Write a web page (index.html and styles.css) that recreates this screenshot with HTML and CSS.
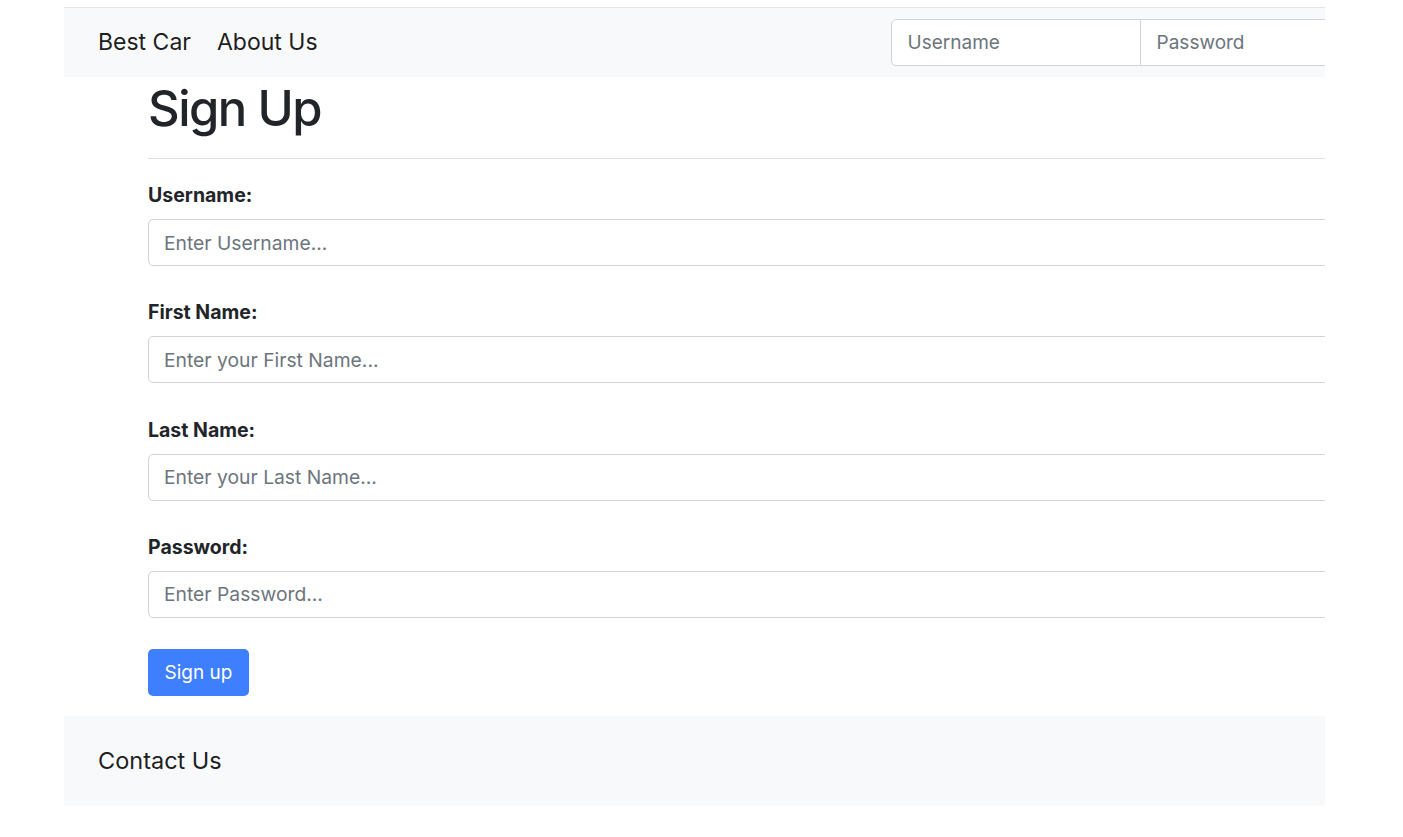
FILE: index.html
```html
<!DOCTYPE html>
<html>
<head>
<meta charset="utf-8">
<link rel="stylesheet" href="styles.css">
</head>
<body>
<div class="frame">
  <div class="page">
    <nav class="navbar">
      <a class="brand">Best Car</a>
      <a class="nav-link">About Us</a>
      <form class="login">
        <input class="login-input first" type="text" placeholder="Username">
        <input class="login-input" type="password" placeholder="Password">
      </form>
    </nav>
    <main class="signup">
      <h1 class="title">Sign Up</h1>
      <hr class="rule">
      <div class="field">
        <label class="label">Username:</label>
        <input class="input" type="text" placeholder="Enter Username...">
      </div>
      <div class="field">
        <label class="label">First Name:</label>
        <input class="input" type="text" placeholder="Enter your First Name...">
      </div>
      <div class="field">
        <label class="label">Last Name:</label>
        <input class="input" type="text" placeholder="Enter your Last Name...">
      </div>
      <div class="field">
        <label class="label">Password:</label>
        <input class="input" type="password" placeholder="Enter Password...">
      </div>
      <button class="btn" type="button">Sign up</button>
    </main>
    <footer class="footer">
      <span class="footer-link">Contact Us</span>
    </footer>
  </div>
</div>
</body>
</html>
```

FILE: styles.css
```css
html, body {
  margin: 0;
  padding: 0;
  background: #ffffff;
}
body {
  font-family: Inter, "Noto Sans", sans-serif;
  color: #212529;
}
.frame {
  margin-left: 64px;
  margin-top: 7px;
  width: 1261px;
  overflow: hidden;
  border-top: 1px solid #e4e5e7;
}
.page {
  width: 1420px;
}
.navbar {
  height: 69px;
  background: #f8f9fa;
  display: flex;
  align-items: center;
  padding-left: 34px;
  box-sizing: border-box;
}
.brand, .nav-link {
  font-size: 23px;
  color: rgba(0,0,0,0.9);
  text-decoration: none;
  line-height: 1;
}
.nav-link {
  margin-left: 26px;
}
.login {
  display: flex;
  margin-left: 573px;
}
.login-input {
  width: 250px;
  height: 47px;
  box-sizing: border-box;
  border: 1px solid #ced4da;
  background: #fff;
  font-family: inherit;
  font-size: 19px;
  padding: 0 16px;
  color: #212529;
  outline: none;
  margin: 0;
}
.login-input.first {
  border-radius: 5px 0 0 5px;
}
.login-input + .login-input {
  margin-left: -1px;
  border-radius: 0;
}
.login-input::placeholder, .input::placeholder {
  color: #6c757d;
}
.signup {
  padding: 2px 0 0 84px;
}
.title {
  margin: 0;
  font-size: 49px;
  font-weight: 500;
  line-height: 60px;
  letter-spacing: -1.5px;
}
.rule {
  margin: 19px 0 21px;
  border: 0;
  border-top: 1px solid #dfe0e2;
}
.field {
  margin-bottom: 31px;
}
.field + .field {
  padding-top: 0.3px;
}
.label {
  display: block;
  font-size: 19.5px;
  font-weight: 700;
  line-height: 30px;
  margin-bottom: 9px;
}
.input {
  display: block;
  width: 1300px;
  height: 47px;
  box-sizing: border-box;
  border: 1px solid #ced4da;
  border-radius: 5px;
  padding: 0 15px;
  font-family: inherit;
  font-size: 19.3px;
  color: #212529;
  outline: none;
  margin: 0;
}
.btn {
  display: block;
  height: 47px;
  width: 101px;
  border: 0;
  border-radius: 5px;
  background: #3e7fff;
  color: #fff;
  font-family: inherit;
  font-size: 19px;
  padding: 0;
  margin: 1px 0 20px;
}
.footer {
  height: 90px;
  background: #f8f9fa;
  display: flex;
  align-items: center;
  padding-left: 34px;
  width: 1261px;
  box-sizing: border-box;
}
.footer-link {
  font-size: 23.5px;
  color: rgba(0,0,0,0.9);
}
```
